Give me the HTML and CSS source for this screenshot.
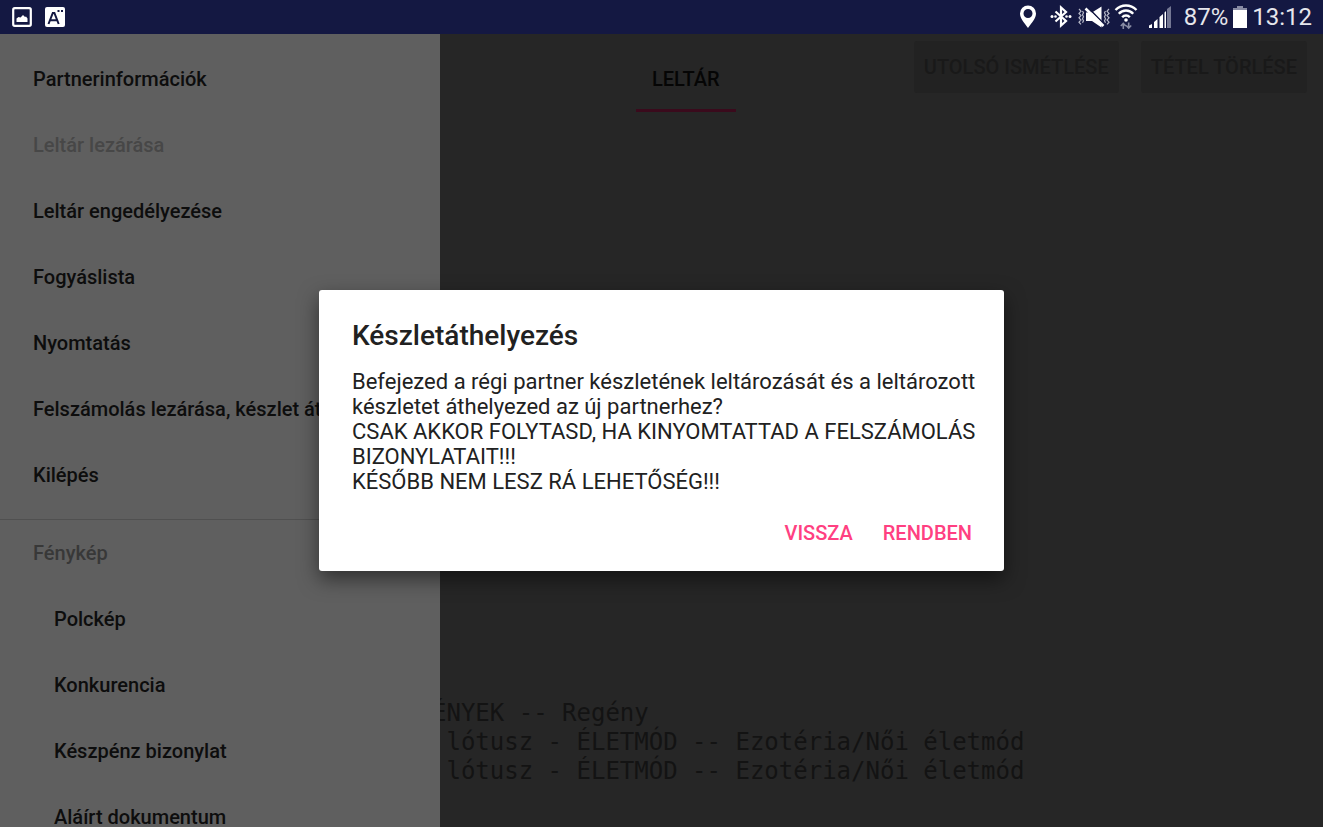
FILE: index.html
```html
<!DOCTYPE html>
<html lang="hu">
<head>
  <meta charset="UTF-8">
  <meta name="viewport" content="width=device-width, initial-scale=1.0">
  <title>Leltár</title>
  <link rel="stylesheet" href="styles.css">
</head>
<body>
  <header class="status-bar">
    <div class="status-group">
      <svg width="20" height="20" viewBox="0 0 20 20">
        <rect x="1.2" y="1.2" width="17.6" height="17.6" rx="1.5" fill="none" stroke="#fff" stroke-width="2.2"/>
        <path d="M4.500 15V11.500l2-1.500 2 .5 2.500-2.500 2 2 1-.5 1.500 2v3.500z" fill="#fff"/>
      </svg>
      <svg class="keyboard-icon" width="20" height="20" viewBox="0 0 20 20">
        <rect width="20" height="20" rx="2" fill="#fff"/>
        <path d="M3.500 17L7.800 6h1.600l4.300 11M5.500 13.200h6.400" fill="none" stroke="#141842" stroke-width="2"/>
        <path d="M12.500 3h2v2h-2zM16 3h2v2h-2z" fill="#141842"/>
      </svg>
    </div>
    <div class="status-group">
      <svg width="18" height="24" viewBox="0 0 18 24">
        <path fill="#fff" fill-rule="evenodd" d="M9 .5a8 8 0 0 1 8 8c0 5-4 9-8 14.500C5 17.500 1 13.500 1 8.500a8 8 0 0 1 8-8zm0 3.500a4.500 4.500 0 1 0 0 9 4.500 4.500 0 0 0 0-9z"/>
      </svg>
      <svg class="bluetooth-icon" width="22" height="24" viewBox="0 0 22 24">
        <path d="M5.500 6.500l10.500 9.500-5 4.500V2.500l5 4.500-10.500 9.500" fill="none" stroke="#fff" stroke-width="2.200"/>
        <circle cx="2" cy="11.500" r="1.500" fill="#fff"/>
        <circle cx="5.500" cy="11.500" r="1.300" fill="#fff"/>
        <circle cx="20" cy="11.500" r="1.500" fill="#fff"/>
        <circle cx="16.500" cy="11.500" r="1.300" fill="#fff"/>
      </svg>
      <svg class="mute-icon" width="32" height="24" viewBox="0 0 32 24">
        <path d="M8 7.500h6l9.500-6v21L14 16H8z" fill="#fff"/>
        <path d="M9.500 2L27 20" stroke="#141842" stroke-width="1.600"/>
        <path d="M7.500 3.500L25.500 21" stroke="#fff" stroke-width="2.600"/>
        <path d="M1 4l2 2.200-2 2.200 2 2.200-2 2.200 2 2.200-2 2.200 2 2.200M4.500 6l1 1.800-1 2 1 2-1 2 1 2-1 2" fill="none" stroke="#b9bbca" stroke-width="1.200"/>
        <path d="M31 4l-2 2.200 2 2.200-2 2.200 2 2.200-2 2.200 2 2.200-2 2.200M27.500 6l-1 1.800 1 2-1 2 1 2-1 2 1 2" fill="none" stroke="#b9bbca" stroke-width="1.200"/>
      </svg>
      <svg width="24" height="26" viewBox="0 0 24 26">
        <path d="M1.500 6c6-6 15-6 21 0M4.800 9.700c4-4.300 10.400-4.300 14.400 0M8.200 13.200c2-2.200 5.600-2.200 7.600 0" fill="none" stroke="#fff" stroke-width="2.400"/>
        <circle cx="12" cy="16" r="1.800" fill="#fff"/>
        <path d="M9.300 25v-5.500M6.800 22l2.500-2.500 2.500 2.500M14.700 18.500V24M12.200 21.500l2.500 2.500 2.500-2.500" fill="none" stroke="#888ba3" stroke-width="1.600"/>
      </svg>
      <svg class="signal-icon" width="24" height="24" viewBox="0 0 24 24">
        <path d="M1 20.500l3-1.500v4H1zM6 17l3.500-3v9H6zM11.500 12L15 9v14h-3.500zM16.500 7.500l1.500-1.500v17h-1.500z" fill="#fff"/>
        <path d="M19 4l4-3v22h-4z" fill="#747793"/>
      </svg>
      <span>87%</span>
      <svg class="battery-icon" width="14" height="22" viewBox="0 0 14 22">
        <path d="M4 0h6v2h4v2H0V2h4z" fill="#888ba3"/>
        <path d="M0 4h14v18H0z" fill="#fff"/>
      </svg>
      <time>13:12</time>
    </div>
  </header>

  <main class="screen">
    <div class="toolbar">
      <button class="tab">LELTÁR</button>
      <div class="toolbar-actions">
        <button disabled>UTOLSÓ ISMÉTLÉSE</button>
        <button disabled>TÉTEL TÖRLÉSE</button>
      </div>
    </div>
    <pre class="stock-log">ÉNYEK -- Regény
 lótusz - ÉLETMÓD -- Ezotéria/Női életmód
 lótusz - ÉLETMÓD -- Ezotéria/Női életmód</pre>

    <nav class="drawer">
      <button>Partnerinformációk</button>
      <button disabled>Leltár lezárása</button>
      <button>Leltár engedélyezése</button>
      <button>Fogyáslista</button>
      <button>Nyomtatás</button>
      <button>Felszámolás lezárása, készlet át</button>
      <button>Kilépés</button>
      <section class="drawer-section">
        <h2>Fénykép</h2>
        <button>Polckép</button>
        <button>Konkurencia</button>
        <button>Készpénz bizonylat</button>
        <button>Aláírt dokumentum</button>
      </section>
    </nav>

    <div class="overlay">
      <div class="dialog" role="dialog" aria-labelledby="dialog-title">
        <h1 id="dialog-title">Készletáthelyezés</h1>
        <p>Befejezed a régi partner készletének leltározását és a leltározott készletet áthelyezed az új partnerhez?<br>
          CSAK AKKOR FOLYTASD, HA KINYOMTATTAD A FELSZÁMOLÁS BIZONYLATAIT!!!<br>
          KÉSŐBB NEM LESZ RÁ LEHETŐSÉG!!!</p>
        <div class="dialog-actions">
          <button>VISSZA</button>
          <button>RENDBEN</button>
        </div>
      </div>
    </div>
  </main>
</body>
</html>
```

FILE: styles.css
```css
* {
  box-sizing: border-box;
}
body {
  display: flex;
  flex-direction: column;
  height: 100vh;
  margin: 0;
  overflow: hidden;
  background: #262626;
  font-family: Roboto, sans-serif;
}
button {
  border: 0;
  padding: 0;
  background: none;
  font: 500 20px/24px Roboto, sans-serif;
}

/* status bar */
.status-bar {
  display: flex;
  justify-content: space-between;
  flex: none;
  height: 34px;
  padding: 0 11px 0 12px;
  background: #141842;
  color: #e6e6ec;
  font-size: 24px;
}
.status-group {
  display: flex;
  align-items: center;
}
.keyboard-icon {
  margin-left: 13px;
}
.bluetooth-icon {
  margin-left: 13px;
}
.mute-icon {
  margin: 0 4px 0 6px;
}
.signal-icon {
  margin: 0 12px 0 10px;
}
.battery-icon {
  margin: 0 5px;
}

/* inventory screen */
.screen {
  position: relative;
  display: flex;
  flex: 1;
  flex-direction: column;
  justify-content: space-between;
  min-height: 0;
}
.toolbar {
  display: flex;
  justify-content: flex-end;
  align-items: flex-start;
  padding: 0 16px;
}
.tab {
  width: 100px;
  height: 78px;
  margin-right: 178px;
  border-bottom: 3px solid #3a0a1c;
  padding-top: 14px;
  color: #050505;
}
.toolbar-actions {
  display: flex;
  gap: 22px;
  padding-top: 7px;
}
.toolbar-actions button {
  height: 52px;
  padding: 0 10px;
  border-radius: 3px;
  background: #222;
  color: #191919;
}
.stock-log {
  margin: 0;
  padding: 0 0 41px 432px;
  color: #131313;
  font: 24px/29px "DejaVu Sans Mono", monospace;
}

/* side menu */
.drawer {
  position: absolute;
  top: 0;
  bottom: 0;
  left: 0;
  width: 440px;
  padding-top: 12px;
  overflow: hidden;
  background: #5f5f5f;
}
.drawer button {
  display: block;
  width: 100%;
  height: 66px;
  padding-left: 33px;
  color: #0d0d0d;
  text-align: left;
  white-space: nowrap;
}
.drawer button:disabled {
  color: #474747;
}
.drawer-section {
  margin-top: 11px;
  border-top: 1px solid #505050;
}
.drawer-section h2 {
  margin: 0;
  padding-left: 33px;
  color: #383838;
  font-size: 20px;
  font-weight: 500;
  line-height: 66px;
}
.drawer-section button {
  padding-left: 54px;
}

/* confirmation dialog */
.overlay {
  position: absolute;
  inset: 0;
  display: flex;
  align-items: center;
  justify-content: center;
}
.dialog {
  width: 685px;
  max-width: 90%;
  padding: 29px 12px 20px 33px;
  border-radius: 3px;
  background: #fff;
  box-shadow: 0 8px 20px rgba(0, 0, 0, 0.5);
  color: #212121;
}
.dialog h1 {
  margin: 0 0 16px;
  font-size: 28px;
  font-weight: 500;
  line-height: 34px;
}
.dialog p {
  margin: 0;
  font-size: 22px;
  line-height: 25px;
}
.dialog-actions {
  display: flex;
  justify-content: flex-end;
  gap: 30px;
  padding: 21px 20px 0 0;
}
.dialog-actions button {
  height: 36px;
  color: #ff4081;
}
```
